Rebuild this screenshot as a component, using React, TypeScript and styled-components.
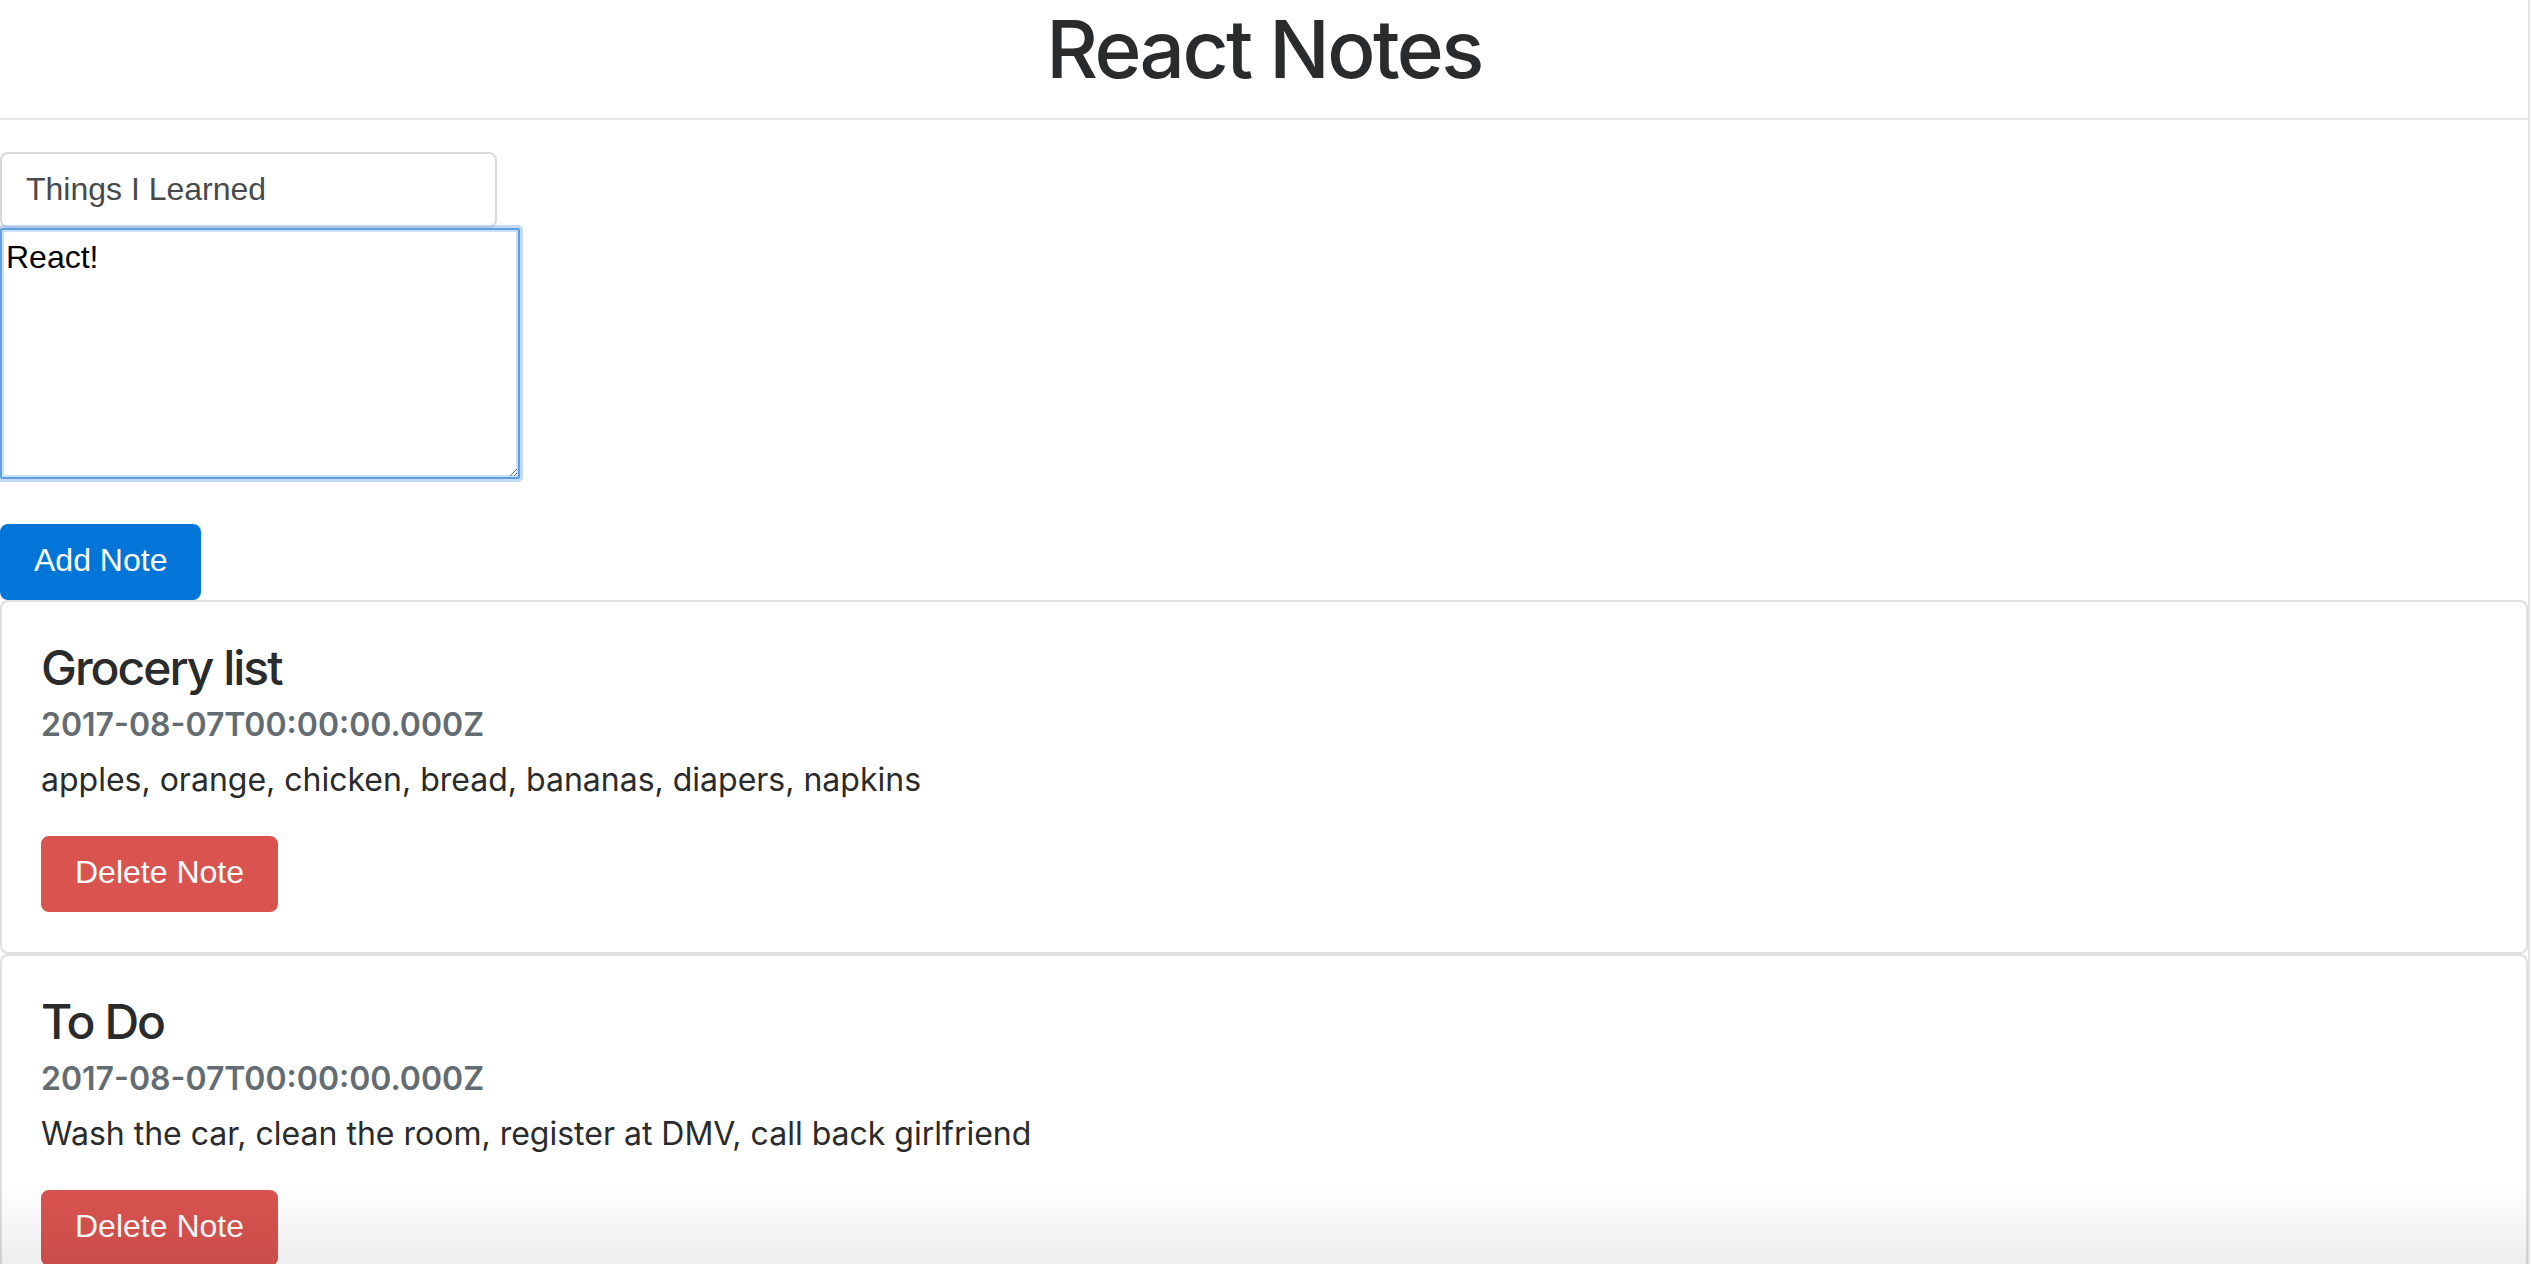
import React from "react";
import styled, { createGlobalStyle } from "styled-components";

const GlobalStyle = createGlobalStyle`
  html, body {
    margin: 0;
    padding: 0;
    background: #ffffff;
  }
  body {
    font-family: Inter, Roboto, "Noto Sans", sans-serif;
    color: #292b2c;
  }
  * { box-sizing: border-box; }
`;

const Page = styled.div`
  position: relative;
  height: 100vh;
  overflow: hidden;
  border-right: 2px solid #e2e2e2;
  &::after {
    content: "";
    position: absolute;
    left: 0;
    right: 0;
    bottom: 0;
    height: 80px;
    pointer-events: none;
    background: linear-gradient(to bottom, rgba(0, 0, 0, 0), rgba(0, 0, 0, 0.07));
  }
`;

const Header = styled.header`
  border-bottom: 2px solid #e6e6e6;
  padding-bottom: 21px;
  text-align: center;
`;

const Title = styled.h1`
  margin: 0;
  font-size: 80px;
  line-height: 97px;
  font-weight: 500;
  letter-spacing: -2.6px;
  color: #292b2c;
`;

const NoteForm = styled.form`
  display: flex;
  flex-direction: column;
  align-items: flex-start;
  padding-top: 32px;
`;

const TitleInput = styled.input`
  display: block;
  width: 497px;
  height: 76px;
  margin: 0;
  padding: 15px 24px 17px;
  border: 2px solid #d9d9d9;
  border-radius: 8px;
  font-family: "Liberation Sans", Arial, sans-serif;
  font-size: 32px;
  line-height: 40px;
  color: #464a4c;
  background: #fff;
  outline: none;
`;

const BodyArea = styled.textarea`
  display: block;
  width: 520px;
  height: 251px;
  margin: 0;
  padding: 3px 4px;
  border: 2px solid #5f9ee0;
  border-radius: 2px;
  font-family: "Liberation Sans", Arial, sans-serif;
  font-size: 32px;
  line-height: 48px;
  color: #000;
  background: #fff;
  outline: 3px solid rgba(120, 170, 240, 0.45);
  outline-offset: 0;
  box-shadow: inset 0 0 0 2px rgba(180, 212, 252, 0.7);
  resize: both;
`;

const Button = styled.button<{ $variant: "primary" | "danger" }>`
  display: inline-block;
  height: 76px;
  margin: 0;
  padding: 14px 32px 18px;
  border: 2px solid ${(p) => (p.$variant === "primary" ? "#0275d8" : "#d9534f")};
  border-radius: 8px;
  background: ${(p) => (p.$variant === "primary" ? "#0275d8" : "#d9534f")};
  color: #fff;
  font-family: "Liberation Sans", Arial, sans-serif;
  font-size: 32px;
  line-height: 40px;
  white-space: nowrap;
  cursor: pointer;
`;

const AddButton = styled(Button)`
  margin-top: 45px;
`;

const NoteList = styled.section`
  display: flex;
  flex-direction: column;
`;

const Card = styled.article`
  display: flex;
  flex-direction: column;
  align-items: flex-start;
  padding: 40px 40px 40px 39px;
  border: 2px solid #dfdfdf;
  border-radius: 8px;
  background: #fff;
`;

const CardTitle = styled.h4`
  margin: 0 0 13px;
  font-size: 48px;
  line-height: 52px;
  font-weight: 500;
  letter-spacing: -2px;
  color: #292b2c;
`;

const CardDate = styled.h6`
  margin: 0 0 13px;
  font-size: 32px;
  line-height: 36px;
  font-weight: 600;
  letter-spacing: 0;
  color: #636c72;
`;

const CardText = styled.p`
  margin: 0 0 32px;
  font-size: 32px;
  line-height: 48px;
  font-weight: 400;
  color: #292b2c;
`;

const notes = [
  {
    id: 1,
    title: "Grocery list",
    date: "2017-08-07T00:00:00.000Z",
    body: "apples, orange, chicken, bread, bananas, diapers, napkins",
  },
  {
    id: 2,
    title: "To Do",
    date: "2017-08-07T00:00:00.000Z",
    body: "Wash the car, clean the room, register at DMV, call back girlfriend",
  },
];

export default function App() {
  return (
    <>
      <GlobalStyle />
      <Page>
        <Header>
          <Title>React Notes</Title>
        </Header>
        <NoteForm onSubmit={(e) => e.preventDefault()}>
          <TitleInput type="text" defaultValue="Things I Learned" />
          <BodyArea defaultValue="React!" />
          <AddButton type="submit" $variant="primary">
            Add Note
          </AddButton>
        </NoteForm>
        <NoteList>
          {notes.map((n) => (
            <Card key={n.id}>
              <CardTitle>{n.title}</CardTitle>
              <CardDate>{n.date}</CardDate>
              <CardText>{n.body}</CardText>
              <Button type="button" $variant="danger">
                Delete Note
              </Button>
            </Card>
          ))}
        </NoteList>
      </Page>
    </>
  );
}
